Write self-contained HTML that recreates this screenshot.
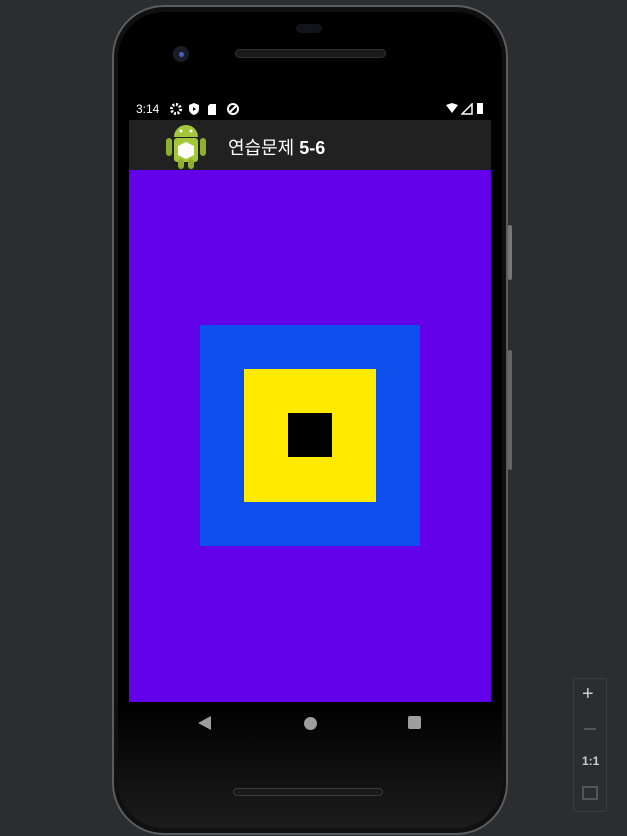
<!DOCTYPE html>
<html><head><meta charset="utf-8"><style>
*{margin:0;padding:0;box-sizing:border-box}
body{width:627px;height:836px;background:#2b2d30;position:relative;overflow:hidden;font-family:"Liberation Sans","Noto Sans CJK KR",sans-serif}
.a{position:absolute}
</style></head><body>
<div class="a" style="left:112px;top:5px;width:396px;height:830px;border-radius:52px;background:#5a5c5e"></div>
<div class="a" style="left:114px;top:7px;width:392px;height:826px;border-radius:50px;background:#101010"></div>
<div class="a" style="left:118px;top:12px;width:384px;height:816px;border-radius:46px;background:linear-gradient(#000 85%,#1c1c1c)"></div>
<div class="a" style="left:508px;top:225px;width:4px;height:55px;background:#777;border-radius:2px"></div>
<div class="a" style="left:508px;top:350px;width:4px;height:120px;background:#666;border-radius:2px"></div>
<div class="a" style="left:296px;top:24px;width:26px;height:9px;border-radius:5px;background:#111418"></div>
<div class="a" style="left:235px;top:49px;width:151px;height:9px;border-radius:5px;background:#1a1a1a;border:1px solid #333"></div>
<div class="a" style="left:173px;top:46px;width:16px;height:16px;border-radius:50%;background:#1a1d28"></div>
<div class="a" style="left:179px;top:52px;width:5px;height:5px;border-radius:50%;background:#4a5ec0"></div>
<div class="a" style="left:233px;top:788px;width:150px;height:8px;border-radius:5px;background:#1a1a1a;border:1px solid #3a3a3a"></div>
<div class="a" style="left:136px;top:102px;color:#fff;font-size:12px">3:14</div>
<svg class="a" style="left:169px;top:102px" width="72" height="14" viewBox="0 0 72 14">
<circle cx="7" cy="7" r="4.5" fill="none" stroke="#fff" stroke-width="3" stroke-dasharray="2 1.5"/><circle cx="7" cy="7" r="1.5" fill="#000"/>
<path d="M25 1l5 2v4c0 3-2 5-5 6-3-1-5-3-5-6V3z" fill="#fff"/><path d="M24 5l3 2-3 2z" fill="#000"/>
<path d="M41 2h6v11h-8V4z" fill="#fff"/>
<circle cx="64" cy="7" r="5" fill="none" stroke="#fff" stroke-width="2"/><path d="M61 10l6-6" stroke="#fff" stroke-width="2"/>
</svg>
<div class="a" style="left:446px;top:103px;width:12px;height:10px;background:#fff;clip-path:polygon(0 20%,50% 0,100% 20%,50% 100%)"></div>
<svg class="a" style="left:461px;top:103px" width="12" height="12"><path d="M11 1V11H1z" fill="none" stroke="#fff" stroke-width="1.5"/></svg>
<div class="a" style="left:477px;top:103px;width:6px;height:11px;background:#fff"></div>
<div class="a" style="left:129px;top:120px;width:362px;height:50px;background:#212121"></div>
<svg class="a" style="left:164px;top:119px" width="44" height="50" viewBox="0 0 44 50">
<path d="M10 18a12 12 0 0 1 24 0z" fill="#a4c639"/>
<rect x="10" y="19" width="24" height="24" rx="3" fill="#a4c639"/>
<rect x="2" y="19" width="6" height="18" rx="3" fill="#8fb02e"/>
<rect x="36" y="19" width="6" height="18" rx="3" fill="#8fb02e"/>
<rect x="14" y="40" width="6" height="10" rx="3" fill="#8fb02e"/>
<rect x="24" y="40" width="6" height="10" rx="3" fill="#8fb02e"/>
<circle cx="17" cy="12" r="1.5" fill="#fff"/><circle cx="27" cy="12" r="1.5" fill="#fff"/>
<path d="M22 23l8 4v9l-8 4-8-4v-9z" fill="#fff"/>
</svg>
<div class="a" style="left:228px;top:134px;color:#fff;font-size:18px">연습문제 <b>5-6</b></div>
<div class="a" style="left:129px;top:170px;width:362px;height:532px;background:#6200ea"></div>
<div class="a" style="left:200px;top:325px;width:220px;height:221px;background:#0d4fed"></div>
<div class="a" style="left:244px;top:369px;width:132px;height:133px;background:#ffea00"></div>
<div class="a" style="left:288px;top:413px;width:44px;height:44px;background:#000"></div>
<div class="a" style="left:198px;top:716px;width:13px;height:14px;background:#9e9e9e;clip-path:polygon(0 50%,100% 0,100% 100%)"></div>
<div class="a" style="left:304px;top:717px;width:13px;height:13px;border-radius:50%;background:#9e9e9e"></div>
<div class="a" style="left:408px;top:716px;width:13px;height:13px;border-radius:2px;background:#9e9e9e"></div>
<div class="a" style="left:573px;top:678px;width:34px;height:134px;border:1px solid #3c3e42;border-radius:4px"></div>
<div class="a" style="left:582px;top:683px;color:#ccc;font-size:20px">+</div>
<div class="a" style="left:584px;top:728px;width:12px;height:2px;background:#555"></div>
<div class="a" style="left:582px;top:754px;color:#ccc;font-size:12px;font-weight:bold">1:1</div>
<div class="a" style="left:582px;top:786px;width:16px;height:14px;border:2px solid #555"></div>
</body></html>
